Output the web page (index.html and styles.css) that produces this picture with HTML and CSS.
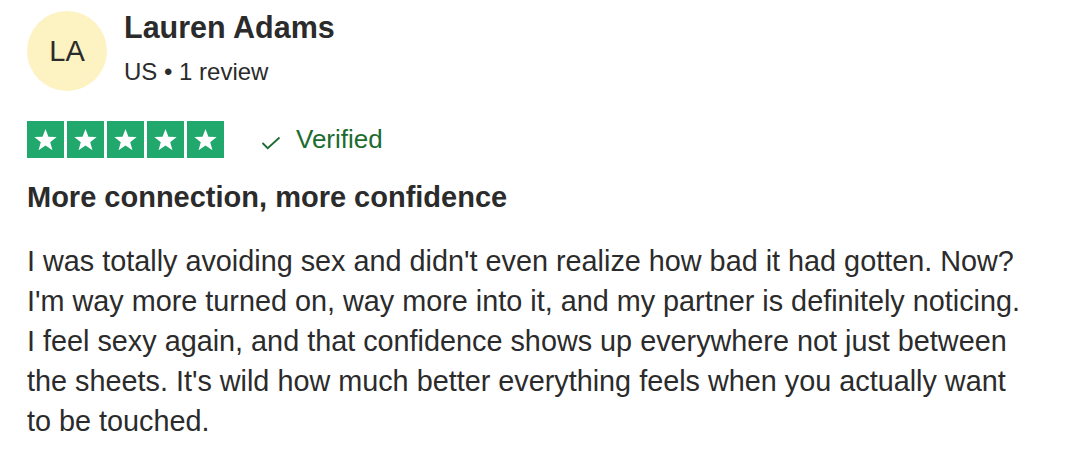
FILE: index.html
```html
<!DOCTYPE html>
<html lang="en">
<head>
<meta charset="utf-8">
<link rel="stylesheet" href="styles.css">
</head>
<body>
<article class="review">
  <header class="author">
    <div class="avatar">LA</div>
    <div class="author-info">
      <div class="name">Lauren Adams</div>
      <div class="meta">US • 1 review</div>
    </div>
  </header>
  <div class="rating-row">
    <div class="stars">
      <span class="star"><svg viewBox="0 0 24 24"><path d="M12 2.6l2.6 6.9 7.3.3-5.7 4.6 2 7.1L12 17.4l-6.2 4.1 2-7.1-5.7-4.6 7.3-.3z" fill="#fff"/></svg></span>
      <span class="star"><svg viewBox="0 0 24 24"><path d="M12 2.6l2.6 6.9 7.3.3-5.7 4.6 2 7.1L12 17.4l-6.2 4.1 2-7.1-5.7-4.6 7.3-.3z" fill="#fff"/></svg></span>
      <span class="star"><svg viewBox="0 0 24 24"><path d="M12 2.6l2.6 6.9 7.3.3-5.7 4.6 2 7.1L12 17.4l-6.2 4.1 2-7.1-5.7-4.6 7.3-.3z" fill="#fff"/></svg></span>
      <span class="star"><svg viewBox="0 0 24 24"><path d="M12 2.6l2.6 6.9 7.3.3-5.7 4.6 2 7.1L12 17.4l-6.2 4.1 2-7.1-5.7-4.6 7.3-.3z" fill="#fff"/></svg></span>
      <span class="star"><svg viewBox="0 0 24 24"><path d="M12 2.6l2.6 6.9 7.3.3-5.7 4.6 2 7.1L12 17.4l-6.2 4.1 2-7.1-5.7-4.6 7.3-.3z" fill="#fff"/></svg></span>
    </div>
    <div class="verified">
      <svg class="check" viewBox="0 0 20 14"><path d="M1.5 7l5.2 5.2L18.5 1.5" fill="none" stroke="#1c6b2f" stroke-width="1.8"/></svg>
      <span>Verified</span>
    </div>
  </div>
  <h2 class="title">More connection, more confidence</h2>
  <p class="body">I was totally avoiding sex and didn't even realize how bad it had gotten. Now? I'm way more turned on, way more into it, and my partner is definitely noticing. I feel sexy again, and that confidence shows up everywhere not just between the sheets. It's wild how much better everything feels when you actually want to be touched.</p>
</article>
</body>
</html>
```

FILE: styles.css
```css
html, body {
  margin: 0;
  padding: 0;
  background: #fff;
}
body {
  font-family: "Liberation Sans", Arial, sans-serif;
  color: #2b2b2b;
}
.review {
  padding: 9px 0 0 27px;
}
.author {
  display: flex;
  align-items: flex-start;
  gap: 17px;
}
.avatar {
  width: 80px;
  height: 80px;
  margin-top: 2px;
  border-radius: 50%;
  background: #fdf2c2;
  display: flex;
  align-items: center;
  justify-content: center;
  font-size: 29px;
  color: #2b2b2b;
  flex-shrink: 0;
}
.name {
  font-size: 30.5px;
  font-weight: bold;
  line-height: 36px;
}
.meta {
  font-size: 24px;
  line-height: 28px;
  margin-top: 13px;
}
.rating-row {
  display: flex;
  align-items: center;
  margin-top: 30px;
}
.stars {
  display: flex;
  gap: 3px;
}
.star {
  width: 37px;
  height: 37px;
  background: #21a86c;
  display: flex;
  align-items: center;
  justify-content: center;
}
.star svg {
  width: 27px;
  height: 27px;
}
.verified {
  display: flex;
  align-items: center;
  gap: 15px;
  margin-left: 37px;
  color: #1c6b2f;
  font-size: 26px;
}
.check {
  width: 20px;
  height: 14px;
  margin-top: 7px;
}
.title {
  font-size: 29px;
  font-weight: bold;
  line-height: 34px;
  margin: 22px 0 0;
}
.body {
  max-width: 1000px;
  font-size: 28.8px;
  line-height: 40px;
  margin: 27px 0 0;
}
```
